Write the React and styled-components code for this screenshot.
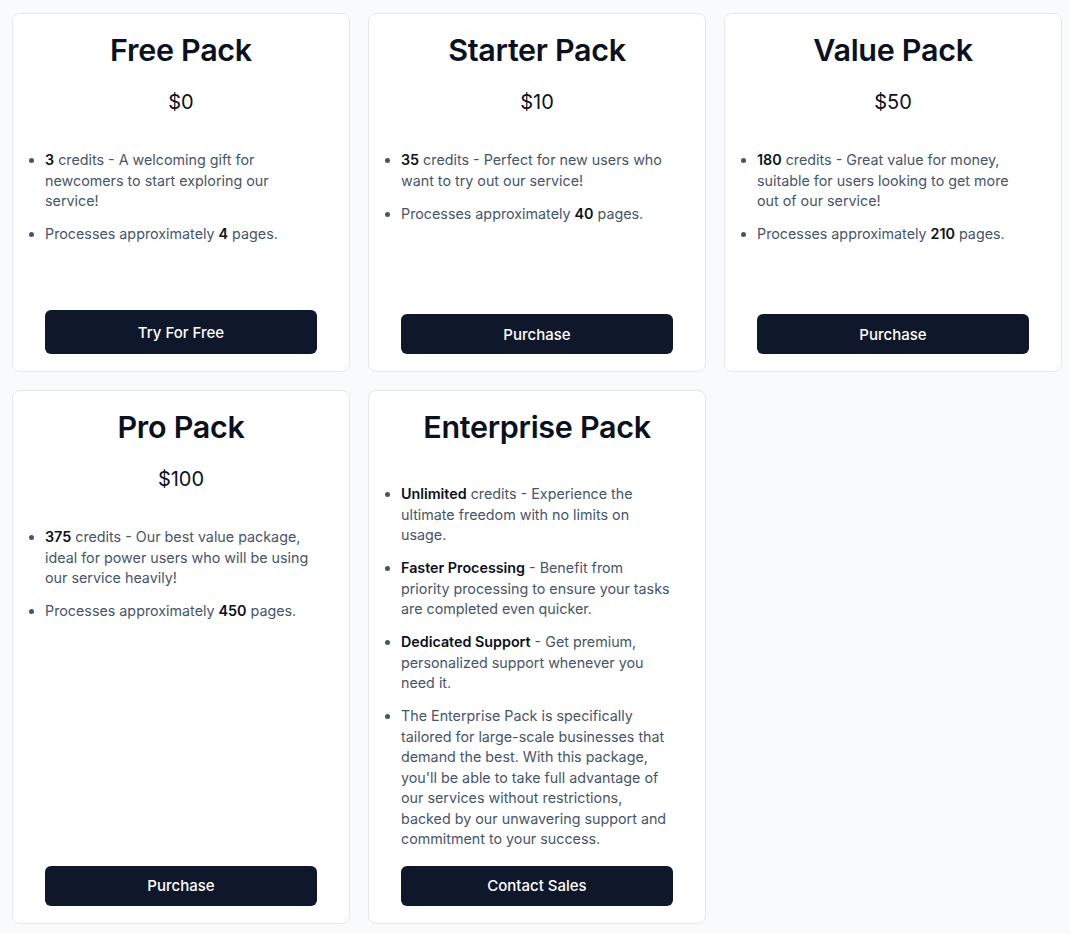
import React from "react";
import styled, { createGlobalStyle } from "styled-components";

const Global = createGlobalStyle`
  * { box-sizing: border-box; }
  html, body { margin: 0; padding: 0; background: #f8fafc; }
  body { font-family: Inter, "Noto Sans", "Liberation Sans", sans-serif; -webkit-font-smoothing: antialiased; }
`;

const Page = styled.div`
  min-height: 934px;
  background: #f8fafc;
  padding: 13px 12px;
`;

const Grid = styled.div`
  display: grid;
  grid-template-columns: repeat(3, 338px);
  gap: 18px;
  align-items: stretch;
`;

const Card = styled.div`
  display: flex;
  flex-direction: column;
  min-height: 359px;
  background: #ffffff;
  border: 1px solid #e5e7eb;
  border-radius: 8px;
  padding: 16px 32px 17px;
`;

const Title = styled.h2`
  margin: 0;
  text-align: center;
  font-size: 30.5px;
  line-height: 40px;
  font-weight: 600;
  letter-spacing: -0.3px;
  color: #0b1120;
`;

const Price = styled.div`
  margin-top: 18px;
  text-align: center;
  font-size: 20px;
  line-height: 28px;
  font-weight: 400;
  color: #0b1120;
`;

const List = styled.ul`
  margin: ${(p) => (p.$noPrice ? "37px" : "34px")} 0 16px;
  padding: 0;
  list-style: disc outside;
  flex: 1;
`;

const Item = styled.li`
  font-size: 14.3px;
  line-height: 20.5px;
  color: #475569;
  & + & { margin-top: 12.5px; }
  &::marker { color: #475569; }
  b { font-weight: 600; color: #0b1120; }
`;

const Button = styled.button`
  display: flex;
  align-items: center;
  justify-content: center;
  width: 100%;
  height: ${(p) => (p.$tall ? "44px" : "40px")};
  border: none;
  border-radius: 6px;
  background: #0f172a;
  color: #ffffff;
  font-family: inherit;
  font-size: 15px;
  font-weight: 500;
  cursor: pointer;
`;

const packs = [
  {
    title: "Free Pack",
    price: "$0",
    button: "Try For Free",
    tall: true,
    items: [
      <><b>3</b> credits - A welcoming gift for newcomers to start exploring our service!</>,
      <>Processes approximately <b>4</b> pages.</>,
    ],
  },
  {
    title: "Starter Pack",
    price: "$10",
    button: "Purchase",
    items: [
      <><b>35</b> credits - Perfect for new users who want to try out our service!</>,
      <>Processes approximately <b>40</b> pages.</>,
    ],
  },
  {
    title: "Value Pack",
    price: "$50",
    button: "Purchase",
    items: [
      <><b>180</b> credits - Great value for money, suitable for users looking to get more out of our service!</>,
      <>Processes approximately <b>210</b> pages.</>,
    ],
  },
  {
    title: "Pro Pack",
    price: "$100",
    button: "Purchase",
    items: [
      <><b>375</b> credits - Our best value package, ideal for power users who will be using our service heavily!</>,
      <>Processes approximately <b>450</b> pages.</>,
    ],
  },
  {
    title: "Enterprise Pack",
    button: "Contact Sales",
    items: [
      <><b>Unlimited</b> credits - Experience the ultimate freedom with no limits on usage.</>,
      <><b>Faster Processing</b> - Benefit from priority processing to ensure your tasks are completed even quicker.</>,
      <><b>Dedicated Support</b> - Get premium, personalized support whenever you need it.</>,
      <>The Enterprise Pack is specifically tailored for large-scale businesses that demand the best. With this package, you'll be able to take full advantage of our services without restrictions, backed by our unwavering support and commitment to your success.</>,
    ],
  },
];

export default function App() {
  return (
    <>
      <Global />
      <Page>
        <Grid>
          {packs.map((p) => (
            <Card key={p.title}>
              <Title>{p.title}</Title>
              {p.price && <Price>{p.price}</Price>}
              <List $noPrice={!p.price}>
                {p.items.map((it, i) => (
                  <Item key={i}>{it}</Item>
                ))}
              </List>
              <Button $tall={p.tall}>{p.button}</Button>
            </Card>
          ))}
        </Grid>
      </Page>
    </>
  );
}
